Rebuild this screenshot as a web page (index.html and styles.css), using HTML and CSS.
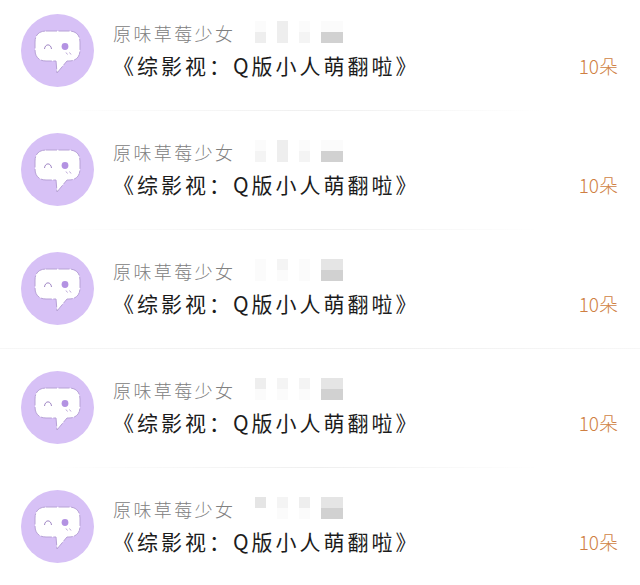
FILE: index.html
```html
<!DOCTYPE html>
<html lang="zh-CN">
<head>
  <meta charset="UTF-8" />
  <title>礼物记录</title>
  <link rel="stylesheet" href="styles.css">
</head>
<body>
  <svg class="defs" width="0" height="0">
    <symbol id="avatar" viewBox="0 0 73 73">
      <circle cx="36.5" cy="36.5" r="36.5" fill="#d7c1f6" />
      <path class="bubble" d="M25 17H48C55 17 59 21 59 28V36C59 43 55 47 48 47H46L36 59L35 47H25C18 47 14 43 14 36V28C14 21 18 17 25 17Z" />
      <path class="wink" d="M23.5 35C24 29.5 30 29.5 30.5 35" />
      <circle cx="44" cy="32.5" r="3.4" fill="#b392e2" />
      <path class="blush" d="M45 38.5L46.5 40.5M48.5 38.5L50 40.5" />
    </symbol>
  </svg>

  <div class="list">
    <div class="row first">
      <svg class="avatar"><use href="#avatar" /></svg>
      <div class="info">
        <div class="name-line">
          <span class="name">原味草莓少女</span>
          <div class="mosaic">
            <span class="s1"></span><span></span><span class="s3"></span><span></span><span class="s1"></span><span></span><span class="s1"></span><span class="s1"></span>
            <span class="s3"></span><span></span><span class="s3"></span><span></span><span class="s2"></span><span></span><span class="s5"></span><span class="s5"></span>
          </div>
        </div>
        <div class="title">《综影视：Q版小人萌翻啦》</div>
      </div>
      <span class="count">10朵</span>
    </div>
    <div class="divider"></div>

    <div class="row">
      <svg class="avatar"><use href="#avatar" /></svg>
      <div class="info">
        <div class="name-line">
          <span class="name">原味草莓少女</span>
          <div class="mosaic">
            <span class="s1"></span><span></span><span class="s3"></span><span></span><span class="s1"></span><span></span><span class="s1"></span><span class="s1"></span>
            <span class="s2"></span><span></span><span class="s3"></span><span></span><span class="s2"></span><span></span><span class="s5"></span><span class="s5"></span>
          </div>
        </div>
        <div class="title">《综影视：Q版小人萌翻啦》</div>
      </div>
      <span class="count">10朵</span>
    </div>
    <div class="divider"></div>

    <div class="row">
      <svg class="avatar"><use href="#avatar" /></svg>
      <div class="info">
        <div class="name-line">
          <span class="name">原味草莓少女</span>
          <div class="mosaic">
            <span class="s1"></span><span></span><span class="s2"></span><span></span><span class="s1"></span><span></span><span class="s4"></span><span class="s4"></span>
            <span class="s1"></span><span></span><span class="s1"></span><span></span><span class="s1"></span><span></span><span class="s5"></span><span class="s5"></span>
          </div>
        </div>
        <div class="title">《综影视：Q版小人萌翻啦》</div>
      </div>
      <span class="count">10朵</span>
    </div>
    <div class="divider full"></div>

    <div class="row">
      <svg class="avatar"><use href="#avatar" /></svg>
      <div class="info">
        <div class="name-line">
          <span class="name">原味草莓少女</span>
          <div class="mosaic">
            <span class="s3"></span><span></span><span class="s2"></span><span></span><span class="s2"></span><span></span><span class="s4"></span><span class="s4"></span>
            <span class="s1"></span><span></span><span class="s1"></span><span></span><span class="s1"></span><span></span><span class="s5"></span><span class="s5"></span>
          </div>
        </div>
        <div class="title">《综影视：Q版小人萌翻啦》</div>
      </div>
      <span class="count">10朵</span>
    </div>
    <div class="divider"></div>

    <div class="row">
      <svg class="avatar"><use href="#avatar" /></svg>
      <div class="info">
        <div class="name-line">
          <span class="name">原味草莓少女</span>
          <div class="mosaic">
            <span class="s4"></span><span></span><span class="s2"></span><span></span><span class="s3"></span><span></span><span class="s4"></span><span class="s4"></span>
            <span></span><span></span><span class="s1"></span><span></span><span class="s1"></span><span></span><span class="s5"></span><span class="s5"></span>
          </div>
        </div>
        <div class="title">《综影视：Q版小人萌翻啦》</div>
      </div>
      <span class="count">10朵</span>
    </div>
  </div>
</body>
</html>
```

FILE: styles.css
```css
html, body {
  height: 585px;
  overflow: hidden;
}

body {
  margin: 0;
  background: #fff;
  font-family: "Noto Sans CJK SC", "Noto Sans", sans-serif;
}

.defs {
  display: block;
  height: 0;
}

.row {
  display: flex;
  align-items: flex-start;
  padding: 23px 22px 23px 21px;
}

.row.first {
  padding-top: 14px;
}

.avatar {
  width: 73px;
  height: 73px;
  flex: none;
}

.bubble {
  fill: #fff;
  stroke: #b7a2d6;
  stroke-width: 1;
  stroke-dasharray: 11 1.5;
}

.wink {
  fill: none;
  stroke: #9f86c4;
  stroke-width: 1;
}

.blush {
  fill: none;
  stroke: #a88fcc;
  stroke-width: 0.8;
}

.info {
  flex: 1;
  margin-left: 19px;
}

.name-line {
  display: flex;
  align-items: flex-start;
  height: 30px;
}

.name {
  width: 142px;
  margin-top: 7px;
  font-size: 18px;
  line-height: 24px;
  font-weight: 300;
  letter-spacing: 2.4px;
  color: #808080;
  white-space: nowrap;
}

.mosaic {
  display: grid;
  grid-template-columns: repeat(8, 11px);
  grid-auto-rows: 11px;
  margin-top: 7px;
}

.s1 { background: #fbfbfb; }
.s2 { background: #f4f4f4; }
.s3 { background: #eeeeee; }
.s4 { background: #e5e5e5; }
.s5 { background: #d1d1d1; }

.title {
  margin-top: 5px;
  font-size: 21px;
  line-height: 32px;
  font-weight: 400;
  letter-spacing: 3px;
  color: #1c1c1c;
  white-space: nowrap;
}

.count {
  margin-top: 39px;
  font-size: 19px;
  line-height: 26px;
  font-weight: 300;
  color: #cf7f42;
  white-space: nowrap;
}

.divider {
  height: 1px;
  margin-bottom: -1px;
  background: linear-gradient(90deg, transparent 50px, #efefef 50%, transparent 540px);
}

.divider.full {
  background: linear-gradient(90deg, #f7f7f7, #efefef 50%, #f7f7f7);
}
```
